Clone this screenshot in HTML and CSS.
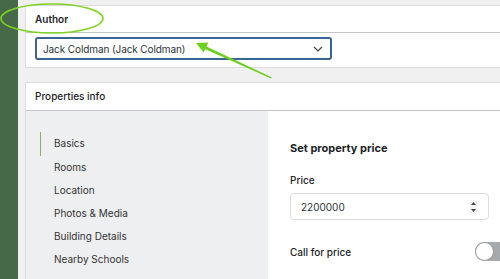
FILE: index.html
```html
<!DOCTYPE html>
<html lang="en">
<head>
    <meta charset="UTF-8">
    <title>Edit property</title>
    <link rel="stylesheet" href="styles.css">
</head>
<body>
<div class="admin-bar"></div>
<div class="main">
    <div class="postbox author-box">
        <div class="postbox-header">Author</div>
        <div class="postbox-inside">
            <div class="select">
                <span>Jack Coldman (Jack Coldman)</span>
                <svg class="chevron" width="10" height="6" viewBox="0 0 10 6"><path d="M1 1 L5 5 L9 1" fill="none" stroke="#3c434a" stroke-width="1.2"/></svg>
            </div>
        </div>
    </div>

    <div class="postbox props-box">
        <div class="postbox-header props-header">Properties info</div>
        <div class="tabs">
            <ul class="tab-nav">
                <li class="active">Basics</li>
                <li>Rooms</li>
                <li>Location</li>
                <li>Photos &amp; Media</li>
                <li>Building Details</li>
                <li>Nearby Schools</li>
            </ul>
            <div class="tab-panel">
                <h3>Set property price</h3>
                <label class="field-label">Price</label>
                <div class="number-input">
                    <span>2200000</span>
                    <span class="spinner">
                        <svg width="7" height="14" viewBox="0 0 7 14"><path d="M3.5 2 L6 5 L1 5 Z" fill="#444"/><path d="M1 9 L6 9 L3.5 12 Z" fill="#444"/></svg>
                    </span>
                </div>
                <div class="switch-row">
                    <span class="field-label">Call for price</span>
                    <span class="switch"><span class="knob"></span></span>
                </div>
            </div>
        </div>
    </div>
</div>

<svg class="annotations" width="500" height="279" viewBox="0 0 500 279">
    <ellipse cx="52" cy="18.5" rx="51" ry="14.5" fill="none" stroke="#7ed321" stroke-width="1.5"/>
    <polygon points="271,78.5 271.6,77.2 206,46.2 204.8,49" fill="#6ed01e"/>
    <polygon points="196,43 208.4,42.6 203.6,52.4" fill="#6ed01e"/>
</svg>
</body>
</html>
```

FILE: styles.css
```css
* {
    box-sizing: border-box;
}
body {
    margin: 0;
    width: 500px;
    height: 279px;
    overflow: hidden;
    display: flex;
    background: #f0f0f1;
    font-family: 'Inter', 'Liberation Sans', sans-serif;
    color: #1d2327;
    position: relative;
}
.admin-bar {
    width: 18px;
    flex-shrink: 0;
    background: #466a48;
}
.main {
    flex: 1;
    padding: 5px 0 0 7px;
    overflow: hidden;
}
.postbox {
    background: #fff;
    border: 1px solid #dcdcde;
    border-right: none;
    width: 520px;
}
.postbox-header {
    height: 27px;
    line-height: 26px;
    padding-left: 9px;
    font-size: 10px;
    font-weight: 600;
    border-bottom: 1px solid #c3c4c7;
}
.postbox-inside {
    padding: 4px 9px 7px;
}
.select {
    width: 297px;
    height: 23px;
    border: 2px solid #3a6491;
    border-radius: 3px;
    display: flex;
    align-items: center;
    justify-content: space-between;
    padding: 0 7px 0 6px;
    font-size: 10px;
    letter-spacing: -0.1px;
    color: #2c3338;
}
.props-box {
    margin-top: 14px;
}
.props-header {
    height: 28px;
    line-height: 27px;
    font-weight: 500;
}
.tabs {
    display: flex;
    height: 200px;
}
.tab-nav {
    list-style: none;
    margin: 0;
    width: 242px;
    padding: 21px 0 0 14px;
    background: #eeeff1;
}
.tab-nav li {
    height: 23px;
    line-height: 23px;
    padding-left: 13px;
    font-size: 10px;
    color: #333;
    border-left: 1.5px solid transparent;
}
.tab-nav li.active {
    border-left-color: #8fac6e;
    height: 24px;
}
.tab-panel {
    padding: 29px 0 0 22px;
    width: 240px;
}
.tab-panel h3 {
    margin: 0;
    height: 16px;
    font-size: 11px;
    font-weight: 700;
    line-height: 16px;
}
.field-label {
    display: block;
    font-size: 10px;
    font-weight: 500;
    margin-top: 17px;
    line-height: 14px;
}
.number-input {
    margin-top: 6px;
    width: 199px;
    height: 27px;
    border: 1px solid #dcdcde;
    border-radius: 4px;
    display: flex;
    align-items: center;
    justify-content: space-between;
    padding: 0 11px 0 10px;
    font-size: 10px;
    color: #2c3338;
}
.spinner {
    display: flex;
    background: #f3f3f3;
}
.switch-row {
    display: flex;
    align-items: center;
    justify-content: space-between;
    width: 221px;
    margin-top: 22px;
}
.switch-row .field-label {
    margin: 0;
}
.switch {
    width: 36px;
    height: 19px;
    border-radius: 10px;
    background: #a7aaad;
    position: relative;
}
.knob {
    position: absolute;
    left: 1px;
    top: 1px;
    width: 17px;
    height: 17px;
    border-radius: 50%;
    background: #fff;
    box-shadow: 0 0 0 1px #9a9da0;
}
.annotations {
    position: absolute;
    left: 0;
    top: 0;
    pointer-events: none;
}
```
